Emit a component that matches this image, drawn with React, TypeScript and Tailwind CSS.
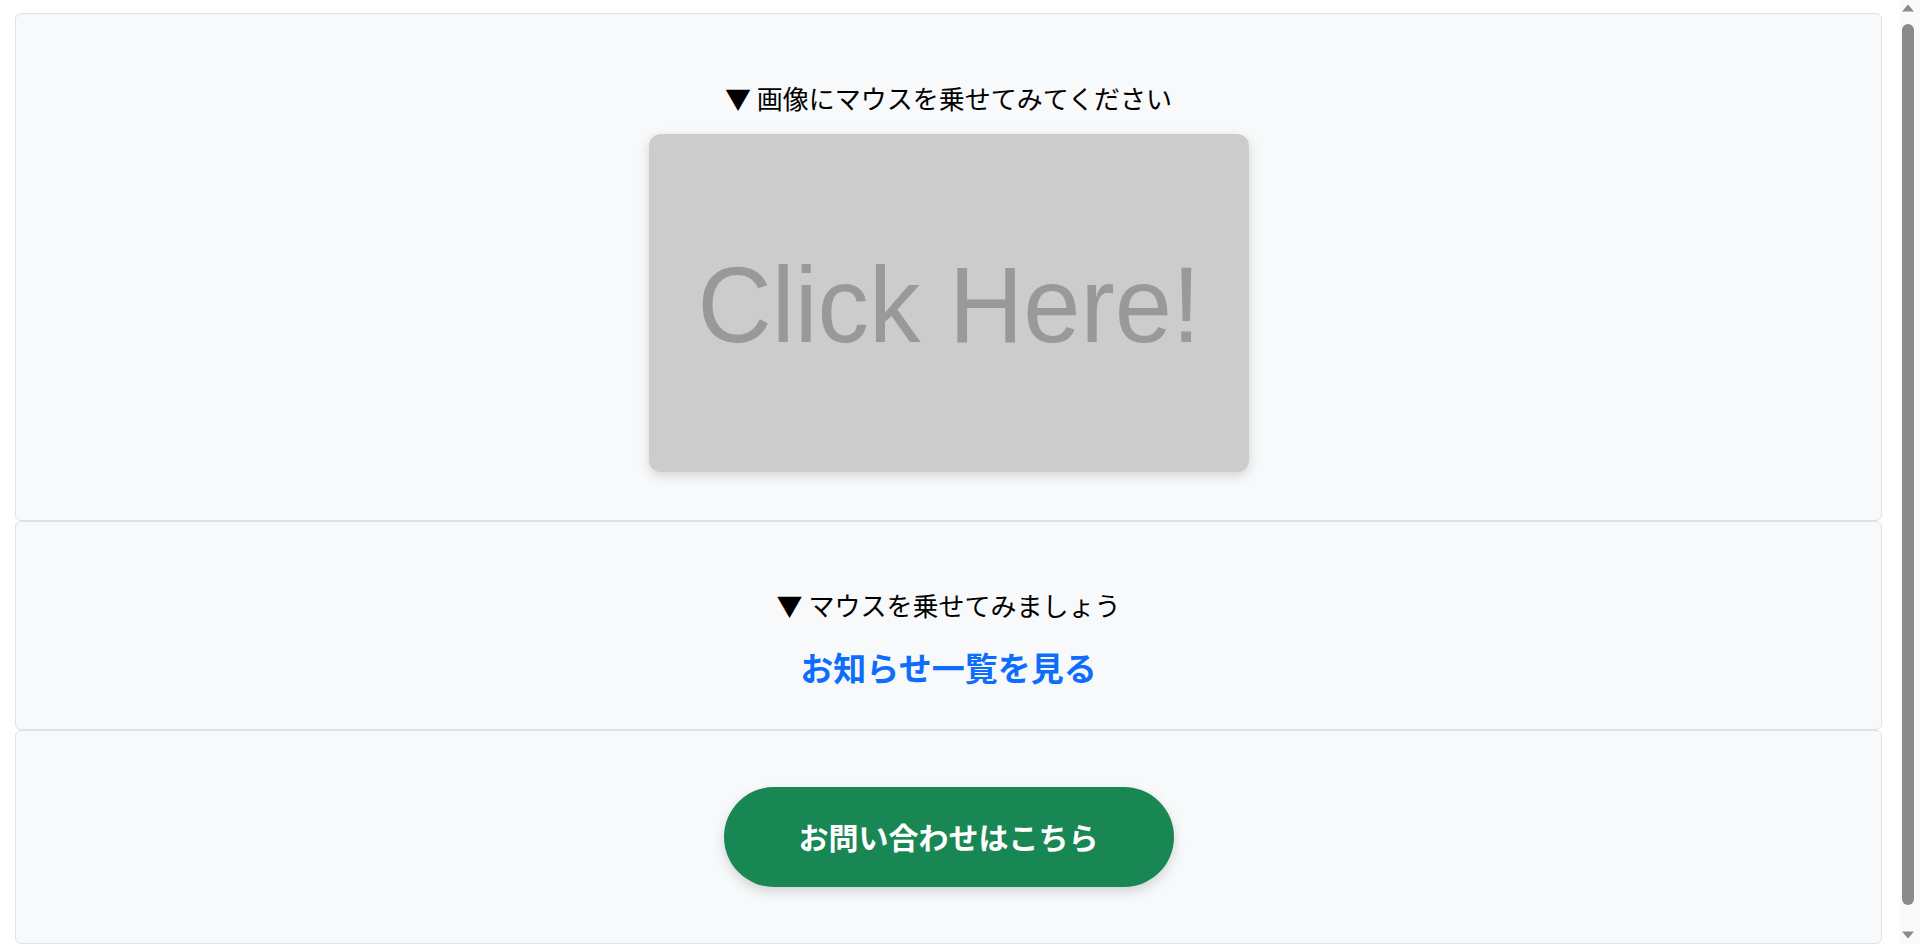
const jp = "font-['Noto_Sans_CJK_JP','Noto_Sans',sans-serif]";

const Panel = ({ className, children }: { className: string; children: React.ReactNode }) => (
  <section
    className={`ml-[15px] mr-[18px] rounded-[6px] border border-[#dee2e6] bg-[#f8f9fa] flex flex-col items-center ${className}`}
  >
    {children}
  </section>
);

// looks like the browser's classic scrollbar
const ScrollBar = () => (
  <div className="w-[20px] h-full bg-[#fafafa] flex flex-col pl-[1px] pr-[5px] pt-[4px] pb-[5px]">
    <svg width="14" height="8" viewBox="0 0 14 8" className="shrink-0">
      <path d="M7 0.5 L13 7.5 L1 7.5 Z" fill="#8b8b8b" />
    </svg>
    <div className="flex-1 mx-[1px] mt-[12px] mb-[26px] rounded-full bg-[#8b8b8b]" />
    <svg width="14" height="8" viewBox="0 0 14 8" className="shrink-0">
      <path d="M1 0.5 L13 0.5 L7 7.5 Z" fill="#8b8b8b" />
    </svg>
  </div>
);

const App = () => {
  return (
    <div className={`bg-white h-screen flex overflow-hidden ${jp}`}>
      <main className="flex-1 min-w-0 pt-[13px] pb-[16px]">
        {/* hover image */}
        <Panel className="pt-[64px] pb-[48px]">
          <p className="text-[26px] leading-[39px] text-black mb-[17px]">▼ 画像にマウスを乗せてみてください</p>
          <div className="w-[600px] h-[337.5px] rounded-[12px] bg-[#cccccc] overflow-hidden shadow-[0_4px_12px_rgba(0,0,0,0.15)]">
            <svg viewBox="0 0 600 337.5" className="w-full h-full">
              <text
                x="300"
                y="208"
                textAnchor="middle"
                fill="#999999"
                fontSize="108"
                fontFamily="'Liberation Sans', Arial, sans-serif"
                textLength="503"
                lengthAdjust="spacingAndGlyphs"
                style={{ filter: "blur(0.4px)" }}
              >
                Click Here!
              </text>
            </svg>
          </div>
        </Panel>

        {/* hover link */}
        <Panel className="pt-[63px] pb-[37px]">
          <p className="text-[26px] leading-[39px] text-black">▼ マウスを乗せてみましょう</p>
          <a href="#" className="mt-[18px] text-[33px] leading-[50px] font-bold text-[#0d6efd]">
            お知らせ一覧を見る
          </a>
        </Panel>

        {/* contact button */}
        <Panel className="py-[56px]">
          <button className="w-[450px] h-[100px] rounded-full bg-[#198754] text-white text-[30px] font-bold shadow-[0_5px_12px_rgba(0,0,0,0.15)]">
            お問い合わせはこちら
          </button>
        </Panel>
      </main>
      <ScrollBar />
    </div>
  );
};

export default App;
